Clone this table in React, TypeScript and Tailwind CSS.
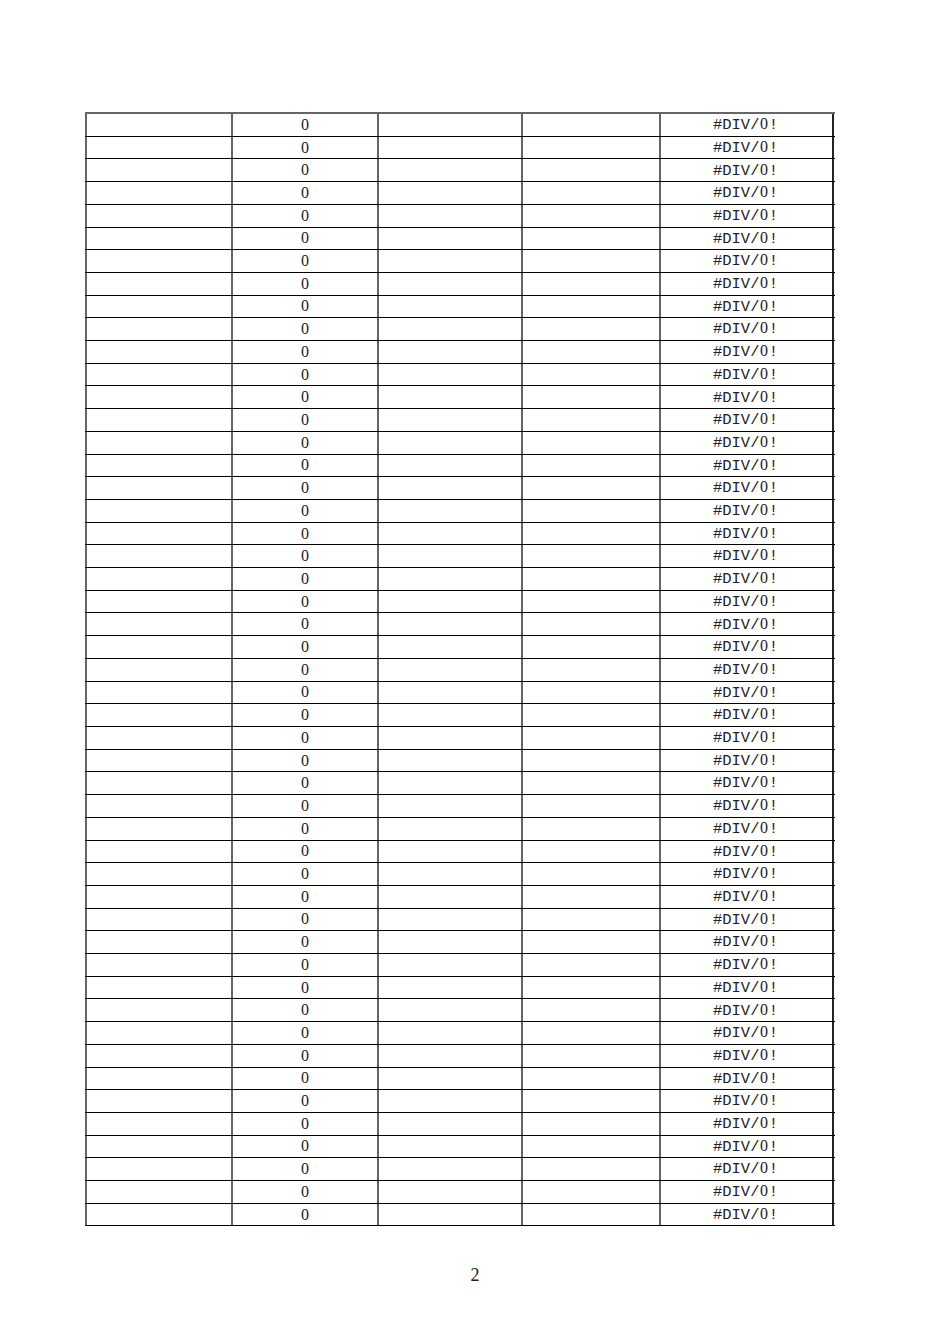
import React from "react";

const rows = Array.from({ length: 49 }, (_, i) => i);

export default function App() {
  return (
    <div className="w-[950px] h-[1344px] bg-white flex flex-col">
      <div className="ml-[85px] mt-[112px] w-[750px] border-t-2 border-[#666]">
        {rows.map((i) => (
          <div
            key={i}
            className="grid grid-cols-[148px_146px_144px_138px_173px] h-[22.714px] border-b border-black"
          >
            <div className="border-l-2 border-r-2 border-[#666]" />
            <div className="border-r-2 border-[#666] flex items-center justify-center text-[16px] leading-none text-[#222]" style={{ fontFamily: '"Liberation Serif", serif' }}>
              0
            </div>
            <div className="border-r-2 border-[#666]" />
            <div className="border-r-2 border-[#666]" />
            <div className="border-r-2 border-[#222] flex items-center justify-center text-[15.5px] leading-none text-[#222] pr-[2px]" style={{ fontFamily: '"Liberation Mono", monospace' }}>
              <span className="whitespace-nowrap">
                #DIV/
                <span className="inline-block w-[9.3px] text-center text-[16px]" style={{ fontFamily: '"Liberation Serif", serif' }}>0</span>
                !
              </span>
            </div>
          </div>
        ))}
      </div>
      <div className="mt-[40px] flex justify-center">
        <span className="text-[18px] leading-none text-[#222]" style={{ fontFamily: '"Liberation Serif", serif' }}>
          2
        </span>
      </div>
    </div>
  );
}
